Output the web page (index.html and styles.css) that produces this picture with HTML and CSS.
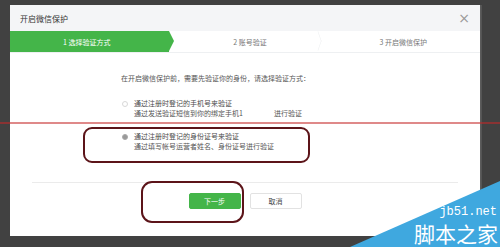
FILE: index.html
```html
<!DOCTYPE html>
<html lang="zh-CN">
<head>
  <meta charset="UTF-8">
  <meta name="viewport" content="width=device-width, initial-scale=1.0">
  <title>开启微信保护</title>
  <link rel="stylesheet" href="styles.css">
</head>
<body>

  <div class="dialog">
    <div class="dialog-header">
      <span class="dialog-title">开启微信保护</span>
      <span class="close">&times;</span>
    </div>

    <div class="steps">
      <div class="step active">1 选择验证方式</div>
      <div class="step next">2 账号验证</div>
      <div class="step">3 开启微信保护</div>
    </div>

    <div class="dialog-body">
      <p class="intro">在开启微信保护前，需要先验证你的身份，请选择验证方式：</p>

      <div class="option">
        <span class="radio"></span>
        <div class="option-text">
          <div>通过注册时登记的手机号来验证</div>
          <div class="sub">通过发送验证短信到你的绑定手机1<span class="verify">进行验证</span></div>
        </div>
      </div>

      <div class="option">
        <span class="radio checked"></span>
        <div class="option-text">
          <div>通过注册时登记的身份证号来验证</div>
          <div class="sub">通过填写帐号运营者姓名、身份证号进行验证</div>
        </div>
      </div>
    </div>

    <div class="dialog-footer">
      <button class="btn btn-primary">下一步</button>
      <button class="btn">取消</button>
    </div>
  </div>

  <!-- hand drawn marks on the screenshot -->
  <div class="mark-line"></div>
  <div class="mark-box option-mark"></div>
  <div class="mark-box button-mark"></div>

  <div class="watermark">
    <span class="wm-url">jb51.net</span>
    <span class="wm-name">脚本之家</span>
  </div>

</body>
</html>
```

FILE: styles.css
```css
body {
  margin: 0;
  width: 500px;
  height: 247px;
  overflow: hidden;
  position: relative;
  background-color: #414141;
  font-family: "Noto Sans CJK SC", "Noto Sans", sans-serif;
  color: #555;
}

.dialog {
  margin: 5px 0 0 10px;
  width: 470px;
  height: 231px;
  background-color: #fff;
  display: flex;
  flex-direction: column;
  box-shadow: 1px 0 0 #5c5c5c, 2px 0 0 #555;
}

.dialog-header {
  height: 26px;
  padding: 0 10px 0 10px;
  display: flex;
  align-items: center;
  justify-content: space-between;
  background-color: #f4f5f7;
}

.dialog-title {
  font-size: 8px;
  color: #333;
}

.close {
  font-family: "DejaVu Sans", sans-serif;
  font-size: 14px;
  color: #999;
  line-height: 1;
}

.steps {
  height: 21px;
  display: flex;
  border-bottom: 1px solid #eef0f2;
}

.step {
  flex: 1;
  position: relative;
  display: flex;
  align-items: center;
  justify-content: center;
  font-size: 7px;
  color: #777;
}

.step.active {
  background-color: #44b549;
  color: #fff;
  padding-right: 6px;
}

.step.active::after {
  content: "";
  position: absolute;
  right: -5px;
  top: 0;
  border-top: 10.5px solid transparent;
  border-bottom: 10.5px solid transparent;
  border-left: 5px solid #44b549;
  z-index: 1;
}

.step.next::after {
  content: "";
  position: absolute;
  right: 2px;
  top: 3px;
  width: 13px;
  height: 13px;
  border-top: 1px solid #eceef0;
  border-right: 1px solid #eceef0;
  transform: scaleX(0.35) rotate(45deg);
}

.step.next {
  padding-left: 4px;
}

.dialog-body {
  flex: 1;
  padding: 20px 0 0 111px;
  font-size: 7px;
  line-height: 10px;
}

.intro {
  margin: 0 0 15px;
}

.option {
  display: flex;
  margin-bottom: 13px;
  color: #4a4a4a;
}

.radio {
  width: 4px;
  height: 4px;
  margin: 3px 6px 0 1px;
  border: 1px solid #d8d8d8;
  border-radius: 50%;
  flex-shrink: 0;
}

.radio.checked {
  border-color: #aaa;
  background-color: #999;
}

.sub {
  color: #555;
}

.verify {
  margin-left: 31px;
}

.dialog-footer {
  height: 54px;
  margin: 0 22px;
  border-top: 1px solid #ebebeb;
  display: flex;
  justify-content: center;
  align-items: flex-start;
  gap: 9px;
  padding-top: 10px;
  box-sizing: border-box;
}

.btn {
  width: 52px;
  height: 16px;
  padding: 0;
  border: 1px solid #e2e2e2;
  border-radius: 2px;
  background-color: #fff;
  color: #444;
  font-family: inherit;
  font-size: 7px;
}

.btn-primary {
  background-color: #44b549;
  border-color: #44b549;
  color: #fff;
}

.mark-line {
  position: absolute;
  left: 0;
  top: 122px;
  width: 500px;
  height: 2px;
  background-color: rgba(196, 40, 40, 0.55);
}

.mark-box {
  position: absolute;
  border: 2px solid #5c1419;
  box-sizing: border-box;
}

.option-mark {
  left: 83px;
  top: 127px;
  width: 227px;
  height: 36px;
  border-radius: 9px;
}

.button-mark {
  left: 141px;
  top: 181px;
  width: 103px;
  height: 42px;
  border-radius: 11px;
}

.watermark {
  position: absolute;
  right: 0;
  bottom: 0;
  z-index: 2;
  width: 150px;
  height: 66px;
  display: flex;
  flex-direction: column;
  align-items: flex-end;
  justify-content: flex-end;
  color: #fff;
}

.watermark::before {
  content: "";
  position: absolute;
  inset: 0;
  background-color: #3fa8df;
  clip-path: polygon(100% 0, 100% 100%, 0 100%);
  z-index: -1;
}

.wm-url {
  font-family: "Liberation Mono", monospace;
  font-size: 12px;
  line-height: 14px;
  margin-right: 3px;
}

.wm-name {
  font-family: "Noto Sans CJK SC", sans-serif;
  font-size: 21px;
  line-height: 28px;
  margin-right: 2px;
}
```
